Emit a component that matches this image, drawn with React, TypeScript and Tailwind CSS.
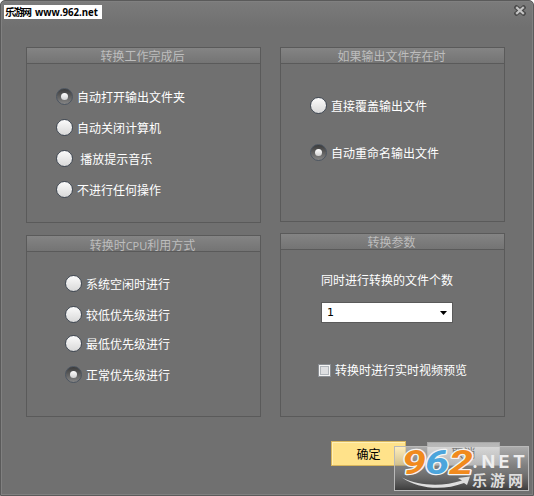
import type { ReactNode } from "react";
import clsx from "clsx";

function Radio({ label, checked, className }: { label: string; checked?: boolean; className?: string }) {
  return (
    <label className={clsx("flex h-[17px] items-center whitespace-pre", className)}>
      <span
        className={clsx(
          "flex h-[17px] w-[17px] shrink-0 items-center justify-center rounded-full border",
          checked
            ? "border-[#4c5561] bg-linear-to-b from-[#3c3c3c] to-[#858585]"
            : "border-[#414954] bg-linear-to-b from-[#fbfbfb] to-[#d9d9d9]"
        )}
      >
        {checked && <span className="h-[7px] w-[7px] rounded-full bg-linear-to-b from-white to-[#d0d0d0]" />}
      </span>
      <span className="ml-1 pt-[3px] leading-[17px]">{label}</span>
    </label>
  );
}

function Panel({ title, className, children }: { title: ReactNode; className?: string; children: ReactNode }) {
  return (
    <section className={clsx("border border-[#5a5a5a]", className)}>
      <h2 className="h-4 border-b border-[#5a5a5a] bg-linear-to-b from-[#848484] to-[#747474] pr-[2px] text-center leading-[19px] text-[#bdbdbd]">
        {title}
      </h2>
      {children}
    </section>
  );
}

function SiteBadge() {
  return (
    <svg className="absolute left-[394px] top-[446px]" width="136" height="46" viewBox="0 0 136 46">
      <defs>
        <linearGradient id="shade" x1="0" y1="0" x2="0" y2="1">
          <stop offset="0" stopColor="#ffffff" stopOpacity="0.42" />
          <stop offset="0.45" stopColor="#909090" stopOpacity="0.45" />
          <stop offset="1" stopColor="#353535" stopOpacity="0.92" />
        </linearGradient>
      </defs>
      <rect x="0.5" y="0.5" width="134" height="44" fill="url(#shade)" stroke="#b9b9b9" />
      <g
        fontFamily="Roboto, 'Liberation Sans', sans-serif"
        fontWeight="700"
        fontStyle="italic"
        fontSize="33"
        stroke="#f4f4f4"
        strokeWidth="2.4"
        strokeLinejoin="round"
        paintOrder="stroke"
      >
        <text x="8" y="27.5" textLength="24" lengthAdjust="spacingAndGlyphs" fill="#f18a1d">9</text>
        <text x="31" y="27.5" textLength="24" lengthAdjust="spacingAndGlyphs" fill="#4ca5dc">6</text>
        <text x="55" y="27.5" textLength="24" lengthAdjust="spacingAndGlyphs" fill="#f18a1d">2</text>
      </g>
      <text
        x="78"
        y="22"
        textLength="53"
        fontFamily="Inter, 'Liberation Sans', sans-serif"
        fontWeight="700"
        fontSize="18"
        fill="#eeeeee"
      >
        .NET
      </text>
      <text
        x="78"
        y="40"
        textLength="51"
        fontFamily="'Noto Sans CJK SC', sans-serif"
        fontWeight="700"
        fontSize="15"
        fill="#dddddd"
      >
        乐游网
      </text>
      <path d="M8 31.5C25 40 48 41 68 34.5l-4-2.500 12-1.500-3 8.500-3-2C49 45 24 43 8 31.500z" fill="#dedede" />
    </svg>
  );
}

export default function App() {
  return (
    <div className="h-[496px] w-[534px] bg-white font-['Liberation_Sans','Noto_Sans_CJK_SC',sans-serif] text-[12px] text-white">
      <main className="relative h-full overflow-hidden rounded-t-[5px] border border-[#5a5a5a] bg-[#707070] bg-linear-to-b from-[#7b7b7b] to-[#707070] to-[26px] shadow-[inset_1px_1px_0_#808080,inset_-1px_-1px_0_#808080]">
        <header className="flex h-[46px] items-start justify-between pl-[3px] pr-[7px] pt-1">
          <div className="h-[14px] w-[98px] bg-white text-black">
            <svg width="98" height="14" className="block" fontWeight="700">
              <text x="1" y="11" textLength="27" fontSize="10" fontFamily="'Noto Sans CJK SC', sans-serif">乐游网</text>
              <text x="31" y="11" textLength="63" lengthAdjust="spacingAndGlyphs" fontSize="10" fontFamily="'Open Sans', sans-serif">www.962.net</text>
            </svg>
          </div>
          <button aria-label="关闭">
            <svg width="12" height="11" viewBox="0 0 12 11" className="block">
              <path d="M2.5 2.5l7 6M9.5 2.5l-7 6" stroke="#4a4a4a" strokeWidth="4.4" strokeLinecap="square" />
              <path d="M3 2.8l6 5.4M9 2.8l-6 5.4" stroke="#c4c4c4" strokeWidth="2.2" strokeLinecap="square" />
            </svg>
          </button>
        </header>

        <div className="flex gap-[19px] pl-[25px]">
          <div className="flex w-[235px] flex-col gap-3">
            <Panel title="转换工作完成后" className="h-[176px]">
              <div className="flex flex-col gap-[14px] pl-[29px] pt-6">
                <Radio label="自动打开输出文件夹" checked />
                <Radio label="自动关闭计算机" />
                <Radio label=" 播放提示音乐" />
                <Radio label="不进行任何操作" />
              </div>
            </Panel>
            <Panel
              title={
                <>
                  转换时<span className="font-['Noto_Sans',sans-serif] text-[11px]">CPU</span>利用方式
                </>
              }
              className="h-[182px]"
            >
              <div className="pl-[38px] pt-[23px]">
                <Radio label="系统空闲时进行" />
                <Radio label="较低优先级进行" className="mt-[14px]" />
                <Radio label="最低优先级进行" className="mt-3" />
                <Radio label="正常优先级进行" className="mt-[14px]" checked />
              </div>
            </Panel>
          </div>

          <div className="flex w-[225px] flex-col gap-[11px]">
            <Panel title="如果输出文件存在时" className="h-[175px]">
              <div className="flex flex-col gap-[30px] pl-[29px] pt-[33px]">
                <Radio label="直接覆盖输出文件" />
                <Radio label="自动重命名输出文件" checked />
              </div>
            </Panel>
            <Panel title="转换参数" className="h-[184px]">
              <div className="pl-10 pt-[23px]">
                <p className="leading-[17px]">同时进行转换的文件个数</p>
                <div className="mt-3 flex h-[21px] w-[132px] items-center justify-between border border-[#5a5a5a] bg-white pl-[5px] pr-[5px] text-black">
                  <span className="pt-[2px] font-['DejaVu_Sans',sans-serif] text-[11px]">1</span>
                  <svg width="7" height="4" viewBox="0 0 7 4">
                    <path d="M0 0h7L3.5 4z" fill="#000" />
                  </svg>
                </div>
              </div>
              <label className="mt-[38px] flex items-center pl-[37px]">
                <span className="flex h-[13px] w-[13px] items-center justify-center border border-[#8b8f94] bg-[#f4f4f4]">
                  <span className="h-[9px] w-[9px] border border-[#b1b6bb] bg-[#dedfe1]" />
                </span>
                <span className="ml-1 pt-[2px] leading-[17px]">转换时进行实时视频预览</span>
              </label>
            </Panel>
          </div>
        </div>

        <footer className="mt-6 flex gap-[21px] pl-[330px] text-black">
          <button className="h-[25px] w-[75px] border border-[#d9b65c] bg-[#ffe28a] pt-[2px] shadow-[inset_1px_1px_0_#fff0b8]">确定</button>
          <button className="mt-px h-6 w-[73px] border border-[#a8a8a8] bg-linear-to-b from-[#b5b5b5] to-[#d0d0d0] text-[#222]">
            取消
          </button>
        </footer>
      </main>
      <SiteBadge />
    </div>
  );
}
